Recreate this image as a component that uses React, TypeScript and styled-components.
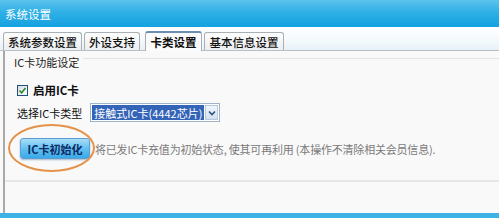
import React from 'react';
import styled, { createGlobalStyle } from 'styled-components';

const GlobalStyle = createGlobalStyle`
  html, body {
    margin: 0;
    padding: 0;
    background: #f9f9f9;
  }
  body {
    font-family: "Noto Sans CJK SC", "Liberation Sans", sans-serif;
  }
`;

const Window = styled.div`
  width: 499px;
  height: 218px;
  display: flex;
  flex-direction: column;
  overflow: hidden;
  background: #f9f9f9;
`;

const TitleBar = styled.div`
  height: 27px;
  flex: none;
  display: flex;
  align-items: center;
  padding-left: 5px;
  background: linear-gradient(to bottom, #5cc3ec 0%, #2fb0e6 45%, #14a2df 100%);
  color: #fff;
  font-size: 11.5px;
`;

const TabStrip = styled.div`
  height: 23px;
  flex: none;
  display: flex;
  align-items: flex-end;
  gap: 2px;
  padding-left: 3px;
  background: linear-gradient(to bottom, #ffffff 0%, #f4f9fc 60%, #e7f1f7 100%);
  border-bottom: 1px solid #b9bfc4;
`;

const Tab = styled.div<{ $active?: boolean; $w: number }>`
  width: ${(p) => p.$w}px;
  height: ${(p) => (p.$active ? 20 : 18)}px;
  box-sizing: border-box;
  display: flex;
  align-items: center;
  justify-content: center;
  font-size: 11.5px;
  font-weight: ${(p) => (p.$active ? 700 : 500)};
  color: #111;
  background: ${(p) => (p.$active ? '#fbfbfb' : 'linear-gradient(to bottom, #fdfdfd, #eceeef)')};
  border: 1px solid #a9b0b5;
  border-top: ${(p) => (p.$active ? '2px solid #6b8fb3' : '1px solid #a9b0b5')};
  border-bottom: none;
  border-radius: 3px 3px 0 0;
  margin-left: ${(p) => (p.$active ? 3 : 0)}px;
  margin-bottom: ${(p) => (p.$active ? -1 : 0)}px;
`;

const Content = styled.div`
  flex: 1;
  margin-left: 3px;
  border-left: 2px solid #a8a8a8;
  display: flex;
  flex-direction: column;
  background: #f9f9f9;
`;

const Footer = styled.div`
  height: 5px;
  flex: none;
  background: #3db2e4;
`;

const Group = styled.div`
  padding: 4px 0 0 9px;
  height: 125px;
  border-bottom: 2px solid #e6e6e6;
  display: flex;
  flex-direction: column;
`;

const Legend = styled.div`
  display: flex;
  align-items: center;
  gap: 4px;
  font-size: 11px;
  color: #222;
  height: 14px;

  &::after {
    content: '';
    flex: 1;
    height: 1px;
    background: #e4e4e4;
    margin-top: -8px;
  }
`;

const Row = styled.div<{ $top: number }>`
  display: flex;
  align-items: center;
  margin-top: ${(p) => p.$top}px;
  padding-left: 3px;
  font-size: 11px;
  color: #111;
`;

const CheckBox = styled.span`
  width: 11px;
  height: 11px;
  box-sizing: border-box;
  border: 1px solid #1c5180;
  background: linear-gradient(135deg, #dcdcdc, #fbfbfb);
  display: inline-flex;
  align-items: center;
  justify-content: center;
  margin-right: 5px;
`;

const BoldLabel = styled.span`
  font-weight: 700;
  font-size: 11.5px;
`;

const Select = styled.div`
  margin-left: 8px;
  width: 130px;
  height: 19px;
  box-sizing: border-box;
  border: 1px solid #9fb3c8;
  background: #fff;
  display: flex;
  align-items: stretch;
  padding: 1px;
`;

const SelectValue = styled.div`
  flex: 1;
  background: #3464b8;
  color: #fff;
  font-size: 11px;
  display: flex;
  align-items: center;
  padding-left: 2px;
  white-space: nowrap;
  overflow: hidden;
`;

const SelectArrow = styled.div`
  width: 13px;
  margin-left: 1px;
  background: linear-gradient(to bottom, #f1f5fb, #d4e0f0);
  border: 1px solid #b8c8dc;
  box-sizing: border-box;
  display: flex;
  align-items: center;
  justify-content: center;
`;

const ActionRow = styled.div`
  display: flex;
  align-items: center;
  margin-top: 16px;
  padding-left: 6px;
`;

const Highlight = styled.div`
  position: relative;
  display: flex;
  align-items: center;
`;

const Ring = styled.div`
  position: absolute;
  left: -12px;
  top: -14px;
  width: 87px;
  height: 48px;
  border: 2px solid #e4924a;
  border-radius: 50%;
  box-sizing: border-box;
  pointer-events: none;
`;

const InitButton = styled.button`
  width: 70px;
  height: 21px;
  padding: 0;
  border: 1px solid #5f9fd3;
  border-radius: 3px;
  background: linear-gradient(to bottom, #a9ddf8 0%, #62c0f0 50%, #3aa9e9 100%);
  color: #0d2a66;
  font-family: inherit;
  font-size: 11px;
  font-weight: 700;
  box-shadow: 0 1px 2px rgba(0, 60, 120, 0.35);
`;

const Hint = styled.span`
  margin-left: 5px;
  font-size: 11px;
  letter-spacing: -0.2px;
  color: #7a7a7a;
  white-space: nowrap;
`;

const tabs = [
  { label: '系统参数设置', w: 79 },
  { label: '外设支持', w: 56 },
  { label: '卡类设置', w: 57, active: true },
  { label: '基本信息设置', w: 80 },
];

const App: React.FC = () => (
  <>
    <GlobalStyle />
    <Window>
      <TitleBar>系统设置</TitleBar>
      <TabStrip>
        {tabs.map((t) => (
          <Tab key={t.label} $active={t.active} $w={t.w}>{t.label}</Tab>
        ))}
      </TabStrip>
      <Content>
        <Group>
          <Legend>IC卡功能设定</Legend>
          <Row $top={13}>
            <CheckBox>
              <svg width="9" height="9" viewBox="0 0 9 9">
                <path d="M1.5 4.5 L3.6 6.7 L7.5 2" fill="none" stroke="#2a8a2a" strokeWidth="1.6" />
              </svg>
            </CheckBox>
            <BoldLabel>启用IC卡</BoldLabel>
          </Row>
          <Row $top={5}>
            <span>选择IC卡类型</span>
            <Select>
              <SelectValue>接触式IC卡(4442芯片)</SelectValue>
              <SelectArrow>
                <svg width="8" height="6" viewBox="0 0 8 6">
                  <path d="M1 1.5 L4 4.5 L7 1.5" fill="none" stroke="#2d4f80" strokeWidth="1.6" />
                </svg>
              </SelectArrow>
            </Select>
          </Row>
          <ActionRow>
            <Highlight>
              <Ring />
              <InitButton>IC卡初始化</InitButton>
            </Highlight>
            <Hint>将已发IC卡充值为初始状态, 使其可再利用 (本操作不清除相关会员信息).</Hint>
          </ActionRow>
        </Group>
      </Content>
      <Footer />
    </Window>
  </>
);

export default App;
